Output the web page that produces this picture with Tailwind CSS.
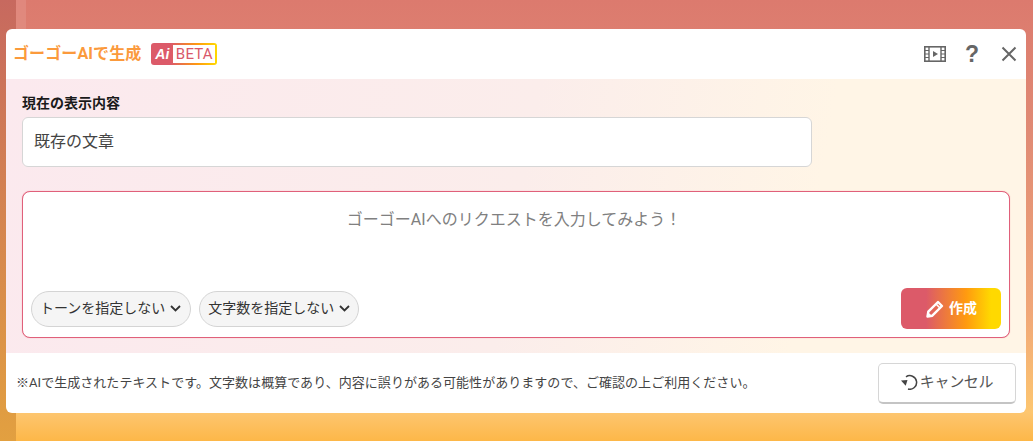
<!DOCTYPE html>
<html lang="ja">
<head>
    <meta charset="UTF-8">
    <title>ゴーゴーAIで生成</title>
    <script src="https://cdn.jsdelivr.net/npm/@tailwindcss/browser@4"></script>
</head>
<body class="w-[1033px] h-[441px] overflow-hidden font-['Roboto','Noto_Sans_CJK_JP',sans-serif] bg-[linear-gradient(180deg,#dc7a6e_0%,#e08a74_30%,#f0a678_70%,#fdc670_93.500%,#fdb748_100%)]">
    <div class="relative h-full pt-[29px] pl-[6px]">
        <!-- page behind the overlay -->
        <div class="absolute left-0 top-0 h-full w-[16px] bg-[linear-gradient(180deg,#c7695f,#e2a040)]"></div>
        <div class="absolute left-[16px] top-0 h-[413px] w-[10px] bg-white/10"></div>

        <!-- Dialog -->
        <div class="relative w-[1020px] h-[384px] bg-white rounded-[6px] overflow-hidden flex flex-col">
            <!-- Header -->
            <div class="h-[50px] shrink-0 flex items-center pl-[7px] pr-[9px]">
                <span class="text-[16px] tracking-[0.1px] font-bold text-[#fb9a3c]">ゴーゴーAIで生成</span>
                <div class="ml-[10px] h-[22px] w-[66px] flex rounded-[3px] bg-[linear-gradient(90deg,#dc5a69_30%,#ff9a10_70%,#ffd900)] p-[2px] pl-0">
                    <div class="w-[22px] flex items-center justify-center text-white text-[14px] font-bold italic leading-none font-['Liberation_Sans']">Ai</div>
                    <div class="flex-1 bg-white flex items-center justify-center text-[15px] leading-none tracking-[0.2px] text-[#d9586a]">BETA</div>
                </div>
                <div class="ml-auto flex items-center">
                    <svg width="22" height="16" viewBox="0 0 22 16" fill="none">
                        <rect x="0.800" y="0.800" width="20.400" height="14.400" stroke="#666" stroke-width="1.600"/>
                        <path d="M5 1v14M17 1v14" stroke="#666" stroke-width="1.400"/>
                        <path d="M1 4.500h4M1 8h4M1 11.500h4M17 4.500h4M17 8h4M17 11.500h4" stroke="#666" stroke-width="1.200"/>
                        <path d="M9 5l5 3-5 3z" fill="#666"/>
                    </svg>
                    <span class="ml-[19px] w-[14px] text-center text-[23px] font-bold leading-none text-[#666] font-['Liberation_Sans']">?</span>
                    <svg class="ml-[22px]" width="16" height="16" viewBox="0 0 16 16" fill="none"><path d="M1.500 1.500l13 13M14.500 1.500l-13 13" stroke="#666" stroke-width="2"/></svg>
                </div>
            </div>

            <!-- Body -->
            <div class="h-[274px] shrink-0 px-[16px] pt-[15px] bg-[linear-gradient(100deg,#fbe9ee_0%,#fbedeb_50%,#fff5e6_78%)]">
                <div class="text-[14px] font-bold leading-[18px] text-[#1a1a1a]">現在の表示内容</div>
                <div class="mt-[5px] w-[790px] h-[50px] bg-white border border-[#d6d6d6] rounded-[6px] flex items-center px-[11px] text-[16px] text-[#444]">既存の文章</div>
                <div class="mt-[24px] w-[988px] h-[147px] bg-white border border-[#e0607a] shadow-[0_0_1px_#ee8f9f] rounded-[8px] flex flex-col px-[8px] pb-[8px]">
                    <div class="pt-[16px] pr-[4px] text-center text-[16px] leading-[24px] text-[#808080]">ゴーゴーAIへのリクエストを入力してみよう！</div>
                    <div class="mt-auto flex items-center">
                        <button class="h-[36px] pl-[8px] pr-[9px] flex items-center gap-[5px] rounded-full border border-[#d4d4d4] bg-[#f5f5f5] text-[14px] text-[#333]">トーンを指定しない
                            <svg width="11" height="7" viewBox="0 0 11 7" fill="none"><path d="M1 1l4.500 4.500L10 1" stroke="#333" stroke-width="1.800"/></svg>
                        </button>
                        <button class="ml-[8px] h-[36px] pl-[8px] pr-[8px] flex items-center gap-[5px] rounded-full border border-[#d4d4d4] bg-[#f5f5f5] text-[14px] text-[#333]">文字数を指定しない
                            <svg width="11" height="7" viewBox="0 0 11 7" fill="none"><path d="M1 1l4.500 4.500L10 1" stroke="#333" stroke-width="1.800"/></svg>
                        </button>
                        <button class="ml-auto w-[100px] h-[41px] flex items-center justify-center gap-[4px] rounded-[6px] bg-[linear-gradient(90deg,#dc5a69_25%,#ff9a10_65%,#ffd900_90%)] text-white text-[14px] font-bold">
                            <svg width="20" height="20" viewBox="0 0 20 20" fill="none"><path d="M2.500 17.500l.8-4.800L13 3l4 4-9.700 9.700z" stroke="#fff" stroke-width="2.400" stroke-linejoin="round"/><path d="M11 5l4 4" stroke="#fff" stroke-width="1.600"/><path d="M2 18l.9-5 4.100 4.100z" fill="#fff"/></svg>
                            作成
                        </button>
                    </div>
                </div>
            </div>

            <!-- Footer -->
            <div class="flex-1 flex items-center pl-[10px] pr-[10px]">
                <p class="text-[13px] tracking-[0.04px] text-[#444]">※AIで生成されたテキストです。文字数は概算であり、内容に誤りがある可能性がありますので、ご確認の上ご利用ください。</p>
                <button class="ml-auto w-[138px] h-[41px] flex items-center justify-center gap-[2px] bg-white border border-[#d6d6d6] border-b-2 border-b-[#c4c4c4] rounded-[5px] text-[15px] tracking-[-0.3px] text-[#555]">
                    <svg class="mb-[1px]" width="17" height="16" viewBox="0 0 17 16" fill="none"><path d="M5 2.800A6.800 6.800 0 1 1 7 15" stroke="#444" stroke-width="1.500"/><path d="M0 6.500l6.500-.5-1.800 5.800z" fill="#444"/></svg>
                    キャンセル
                </button>
            </div>
        </div>
    </div>
</body>
</html>
